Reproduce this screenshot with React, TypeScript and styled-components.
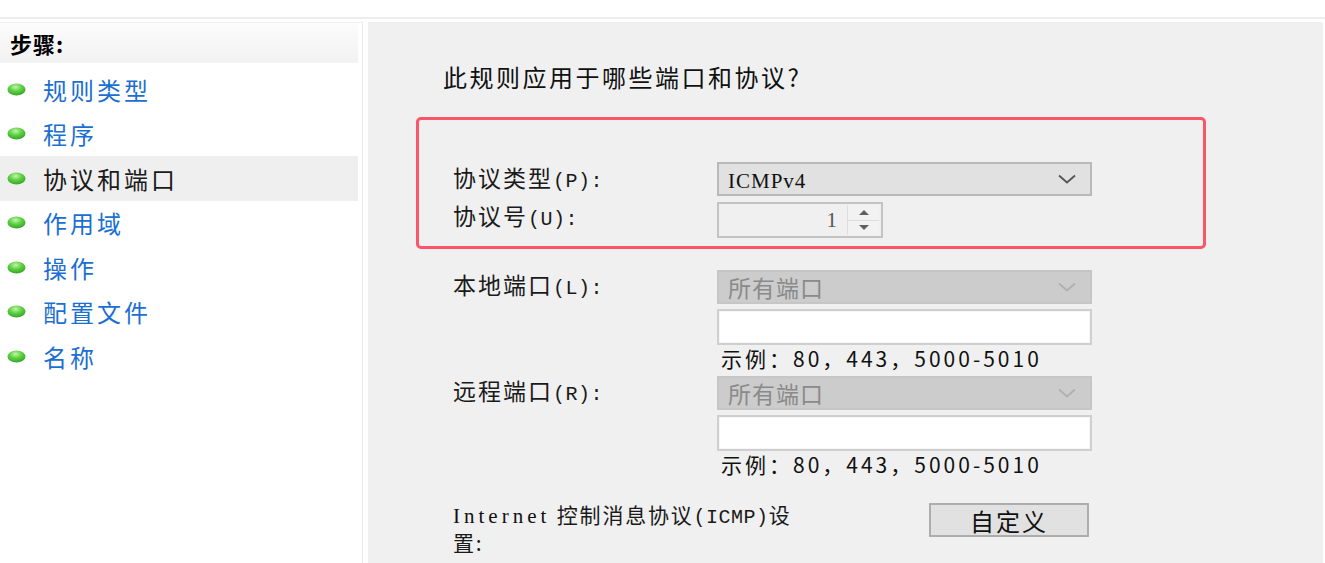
import React from "react";
import styled, { createGlobalStyle } from "styled-components";

const GlobalStyle = createGlobalStyle`
  html, body { margin: 0; padding: 0; background: #ffffff; }
  body {
    font-family: "Noto Sans CJK SC", "Noto Sans", sans-serif;
    color: #1a1a1a;
    overflow: hidden;
  }
  * { box-sizing: border-box; }
`;

const Page = styled.div`
  width: 1325px;
  height: 563px;
  display: flex;
  flex-direction: column;
  background: #ffffff;
`;

const TopBar = styled.div`
  height: 17px;
  flex: none;
  border-bottom: 2px solid #ededed;
  margin-bottom: 3px;
  box-sizing: content-box;
`;

const Main = styled.div`
  flex: 1;
  display: flex;
  min-height: 0;
`;

const Sidebar = styled.aside`
  width: 363px;
  flex: none;
  background: #ffffff;
  border-right: 1px solid #e8e8e8;
  border-top: 1px solid #f1f1f1;
  display: flex;
  flex-direction: column;
`;

const SidebarHeader = styled.div`
  height: 40px;
  display: flex;
  align-items: center;
  padding-left: 10px;
  background: linear-gradient(#fcfcfc, #f2f2f2);
  border-bottom: 1px solid #f4f4f4;
  margin-right: 4px;
  font-size: 22px;
  font-weight: 700;
  letter-spacing: 1px;
  color: #000;
`;

const StepList = styled.ul`
  list-style: none;
  margin: 4px 0 0 0;
  padding: 0;
`;

const StepItem = styled.li<{ $current?: boolean }>`
  height: 44.5px;
  display: flex;
  align-items: center;
  gap: 17px;
  padding-left: 7px;
  margin-right: 4px;
  background: ${(p) => (p.$current ? "#efefef" : "transparent")};
  color: ${(p) => (p.$current ? "#1a1a1a" : "#1b6fd2")};
  font-size: 24px;
  letter-spacing: 3px;
`;

const Gutter = styled.div`
  width: 5px;
  flex: none;
  background: #ffffff;
`;

const Content = styled.section`
  flex: 1;
  background: #f0f0f0;
  margin-right: 2px;
  padding: 40px 0 0 48px;
`;

const Question = styled.div`
  margin-left: 27px;
  height: 30px;
  line-height: 30px;
  font-size: 24px;
  letter-spacing: 2.5px;
  color: #111;
`;

const RedBox = styled.div`
  margin-top: 25px;
  width: 790px;
  border: 3px solid #fa5568;
  border-radius: 5px;
  padding: 42px 0 8px 34px;
  display: grid;
  grid-template-columns: 264px 375px;
  grid-template-rows: 34px 36px;
  row-gap: 6px;
  align-items: center;
`;

const Label = styled.div<{ $raise?: number }>`
  font-size: 23px;
  letter-spacing: 2px;
  color: #1a1a1a;
  white-space: nowrap;
  line-height: 30px;
  margin-top: ${(p) => (p.$raise ? -p.$raise : 0)}px;
`;

const Mono = styled.span`
  font-family: "Liberation Mono", "Noto Sans CJK SC", monospace;
  font-size: 20px;
  letter-spacing: 0.5px;
`;

const Serif = styled.span<{ $spacing: number }>`
  font-family: "Liberation Serif", "Noto Sans CJK SC", serif;
  font-size: 21px;
  letter-spacing: ${(p) => p.$spacing}px;
  color: #111;
`;

const Select = styled.div<{ $disabled?: boolean }>`
  height: 34px;
  display: flex;
  align-items: center;
  justify-content: space-between;
  padding: 0 14px 0 9px;
  background: ${(p) => (p.$disabled ? "#cccccc" : "#e1e1e1")};
  border: 2px solid ${(p) => (p.$disabled ? "#c6c6c6" : "#b9b9b9")};
  color: ${(p) => (p.$disabled ? "#8a8a8a" : "#111")};
  font-size: 23px;
  letter-spacing: 1px;
`;

const SelectText = styled.span`
  line-height: 30px;
`;

const Chevron = ({ color }: { color: string }) => (
  <svg width="18" height="10" viewBox="0 0 18 10">
    <polyline points="1,1.5 9,8.5 17,1.5" fill="none" stroke={color} strokeWidth="1.8" />
  </svg>
);

const Spinner = styled.div`
  width: 166px;
  height: 36px;
  display: flex;
  align-items: stretch;
  border: 2px solid #c3c3c3;
  background: #f0f0f0;
`;

const SpinValue = styled.div`
  flex: 1;
  display: flex;
  align-items: center;
  justify-content: flex-end;
  padding-right: 10px;
  font-family: "Liberation Serif", serif;
  font-size: 21px;
  color: #555;
`;

const SpinButtons = styled.div`
  width: 32px;
  margin: 1px 2px 1px 0;
  display: flex;
  flex-direction: column;
  border-left: 1px solid #dedede;
`;

const SpinBtn = styled.div<{ $down?: boolean }>`
  flex: 1;
  display: flex;
  align-items: center;
  justify-content: center;
  border-bottom: ${(p) => (p.$down ? "none" : "1px solid #dcdcdc")};
  background: #f2f2f2;
`;

const Arrow = ({ down }: { down?: boolean }) => (
  <svg width="12" height="7" viewBox="0 0 12 7">
    <polygon points={down ? "1,1 11,1 6,6" : "1,6 11,6 6,1"} fill="#606060" />
  </svg>
);

const Form = styled.div`
  margin-left: 37px;
  margin-top: 21px;
  display: grid;
  grid-template-columns: 264px 375px;
  row-gap: 6px;
`;

const PortLabel = styled(Label)`
  height: 34px;
  line-height: 28px;
`;

const PortColumn = styled.div`
  display: flex;
  flex-direction: column;
`;

const TextInput = styled.div`
  height: 36px;
  margin-top: 5px;
  background: #ffffff;
  border: 2px solid #cfcfcf;
  box-shadow: inset 0 0 0 1px #f6f6f6;
`;

const Example = styled.div`
  height: 24px;
  line-height: 24px;
  padding-left: 4px;
  margin-top: 1px;
  font-size: 21px;
  letter-spacing: 3px;
  color: #111;
  white-space: nowrap;
`;

const IcmpRow = styled.div`
  margin-left: 37px;
  margin-top: 27px;
  display: grid;
  grid-template-columns: 476px 160px;
  align-items: start;
`;

const IcmpLabel = styled.div`
  font-size: 21px;
  letter-spacing: 1.8px;
  line-height: 25px;
  margin-top: -1px;
  color: #1a1a1a;
`;

const Button = styled.div`
  height: 34px;
  display: flex;
  align-items: center;
  justify-content: center;
  background: #e1e1e1;
  border: 2px solid #adadad;
  font-size: 24px;
  letter-spacing: 2px;
  color: #111;
`;

const Bullet = () => (
  <svg width="19" height="13" viewBox="0 0 19 13">
    <defs>
      <radialGradient id="bg" cx="45%" cy="30%" r="75%">
        <stop offset="0%" stopColor="#c4f4ae" />
        <stop offset="45%" stopColor="#5fd143" />
        <stop offset="100%" stopColor="#2f9f22" />
      </radialGradient>
    </defs>
    <ellipse cx="9.5" cy="6.5" rx="9" ry="6" fill="url(#bg)" />
  </svg>
);

const steps = ["规则类型", "程序", "协议和端口", "作用域", "操作", "配置文件", "名称"];

export default function App() {
  return (
    <>
      <GlobalStyle />
      <Page>
        <TopBar />
        <Main>
          <Sidebar>
            <SidebarHeader>步骤:</SidebarHeader>
            <StepList>
              {steps.map((s) => (
                <StepItem key={s} $current={s === "协议和端口"}>
                  <Bullet />
                  <span>{s}</span>
                </StepItem>
              ))}
            </StepList>
          </Sidebar>
          <Gutter />
          <Content>
            <Question>此规则应用于哪些端口和协议?</Question>
            <RedBox>
              <Label>
                协议类型<Mono>(P):</Mono>
              </Label>
              <Select>
                <SelectText>
                  <Serif $spacing={1}>ICMPv4</Serif>
                </SelectText>
                <Chevron color="#555" />
              </Select>
              <Label $raise={5}>
                协议号<Mono>(U):</Mono>
              </Label>
              <Spinner>
                <SpinValue>1</SpinValue>
                <SpinButtons>
                  <SpinBtn>
                    <Arrow />
                  </SpinBtn>
                  <SpinBtn $down>
                    <Arrow down />
                  </SpinBtn>
                </SpinButtons>
              </Spinner>
            </RedBox>
            <Form>
              <PortLabel>
                本地端口<Mono>(L):</Mono>
              </PortLabel>
              <PortColumn>
                <Select $disabled>
                  <SelectText>所有端口</SelectText>
                  <Chevron color="#b0b0b0" />
                </Select>
                <TextInput />
                <Example>示例：80，443，5000-5010</Example>
              </PortColumn>
              <PortLabel>
                远程端口<Mono>(R):</Mono>
              </PortLabel>
              <PortColumn>
                <Select $disabled>
                  <SelectText>所有端口</SelectText>
                  <Chevron color="#b0b0b0" />
                </Select>
                <TextInput />
                <Example>示例：80，443，5000-5010</Example>
              </PortColumn>
            </Form>
            <IcmpRow>
              <IcmpLabel>
                <Serif $spacing={4}>Internet</Serif> 控制消息协议<Mono>(ICMP)</Mono>设
                <br />
                置:
              </IcmpLabel>
              <Button>自定义</Button>
            </IcmpRow>
          </Content>
        </Main>
      </Page>
    </>
  );
}
